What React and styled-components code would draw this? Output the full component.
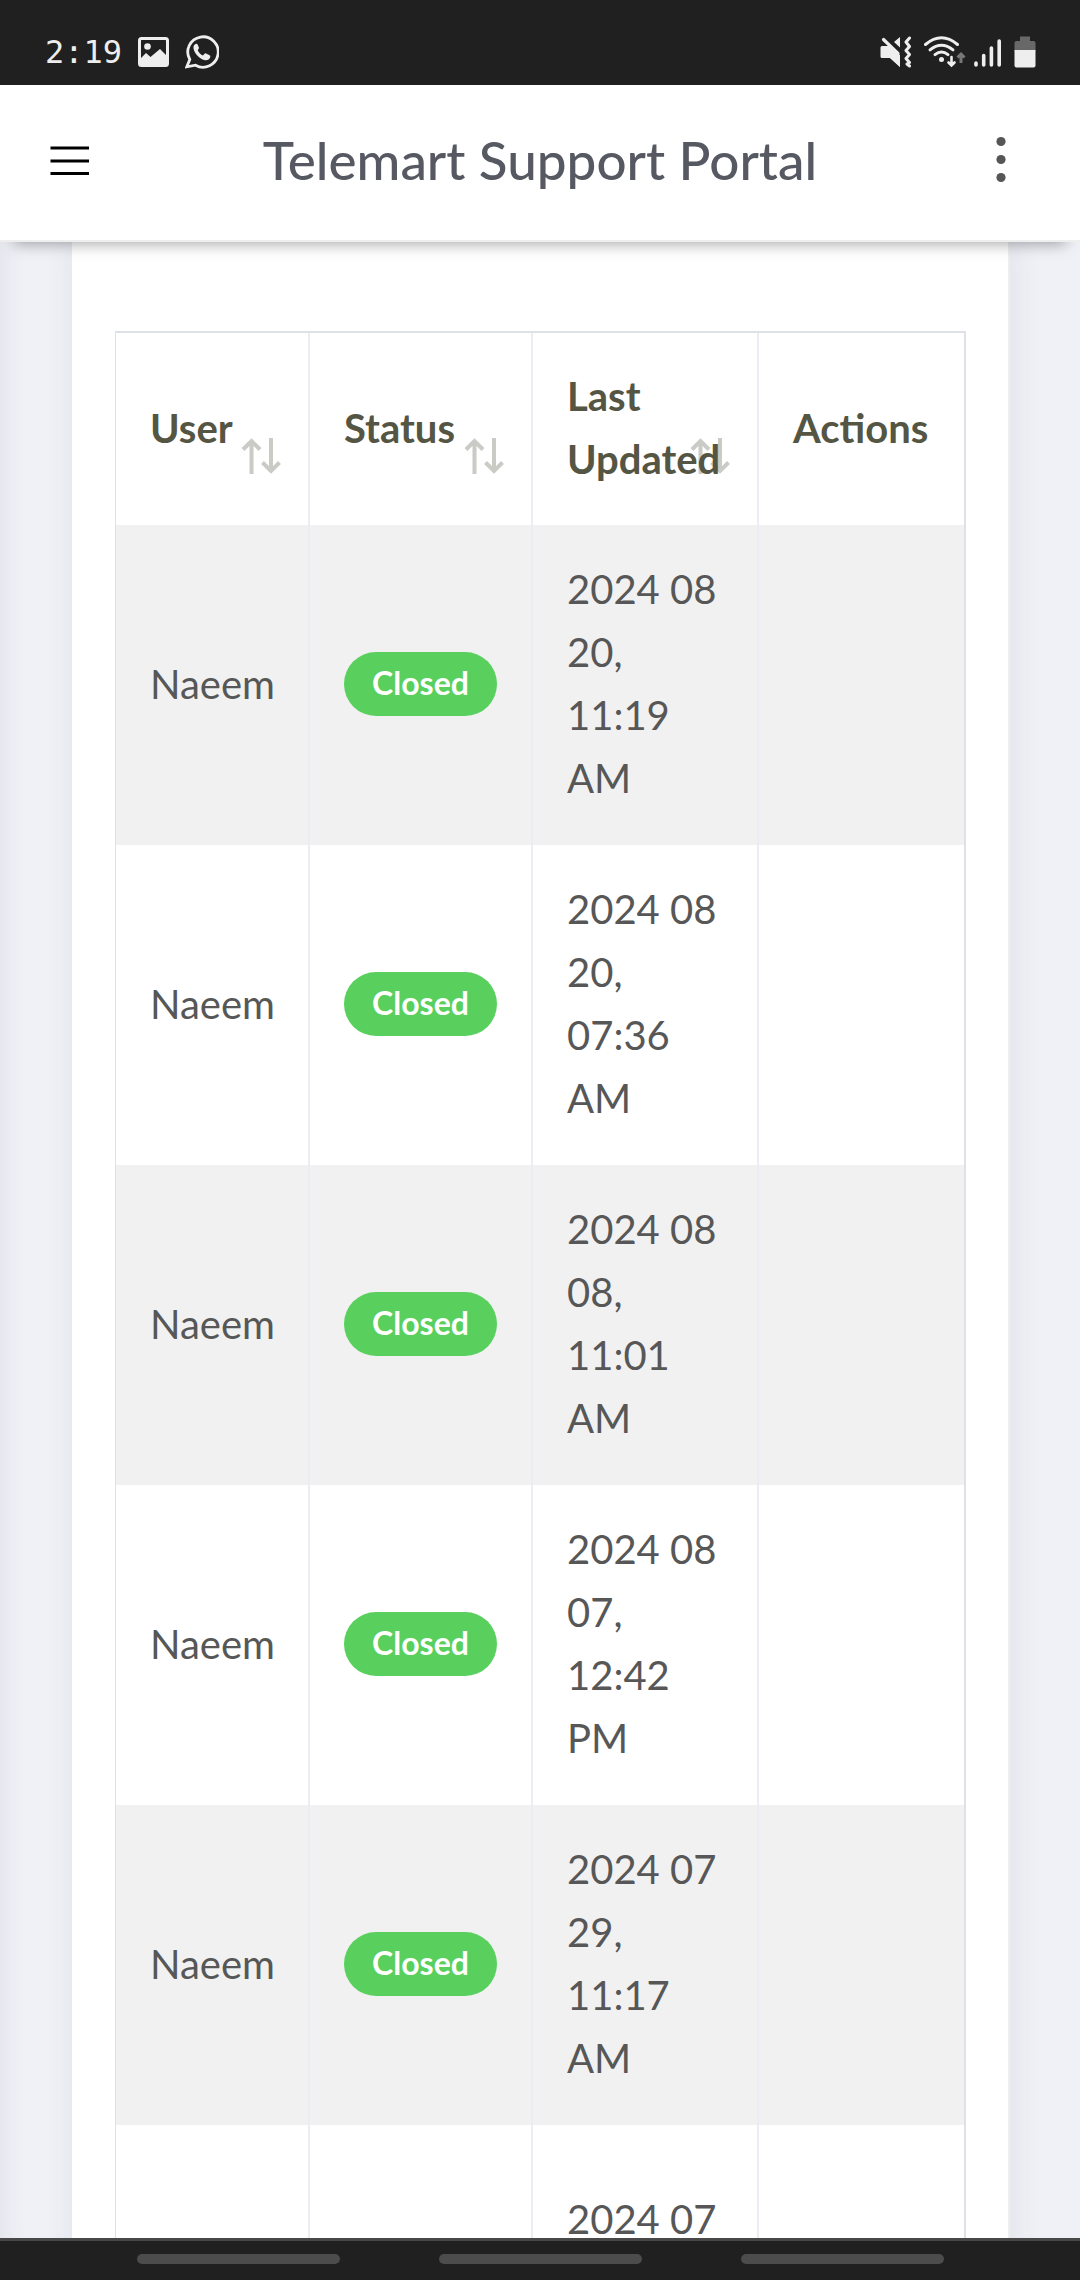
import React from 'react'
import styled, { createGlobalStyle } from 'styled-components'

const GlobalStyle = createGlobalStyle`
*{
  box-sizing:border-box;
}
body{
  margin:0;
  background-color:#eff1f7;
  font-family:Lato,"Open Sans",sans-serif;
}
button{
  border:none;
  background:none;
  padding:0;
  margin:0;
  font:inherit;
  color:inherit;
  text-align:left;
  cursor:pointer;
}
svg{
  display:block;
  flex:none;
}
`
const Screen = styled.div`
  display:flex;
  flex-direction:column;
  height:100vh;
  overflow:hidden;
`
const StatusBar = styled.div`
  display:flex;
  justify-content:space-between;
  align-items:center;
  flex:none;
  height:85px;
  padding:18px 44px 0 45px;
  background-color:#202020;
  color:#eeeeee;
`
const Group = styled.div`
  display:flex;
  align-items:center;
  gap:${props => props.$gap};
`
const Time = styled.span`
  font-family:"DejaVu Sans Mono",monospace;
  font-size:32px;
  line-height:40px;
`
const Header = styled.header`
  position:relative;
  z-index:2;
  display:flex;
  justify-content:space-between;
  align-items:center;
  flex:none;
  height:157px;
  padding:0 74px 6px 50px;
  background-color:#ffffff;
  border-bottom:2px solid #eeeeee;
  box-shadow:0 16px 14px -14px rgba(0,0,0,0.35);
`
const Title = styled.h1`
  margin:0;
  font-size:53px;
  font-weight:500;
  line-height:64px;
  color:#575962;
`
const Main = styled.main`
  flex:1;
  min-height:0;
  overflow-y:auto;
  scrollbar-width:none;
  padding:0 70px 0 72px;
  background-color:#eff1f7;
  box-shadow:inset 24px 0 24px -20px rgba(69,65,78,0.08);
`
const Card = styled.section`
  min-height:100%;
  padding:89px 42px 0 43px;
  background-color:#ffffff;
  border-right:2px solid #eeeeee;
  box-shadow:2px 0 30px rgba(69,65,78,0.09);
`
const Table = styled.table`
  width:100%;
  table-layout:fixed;
  border-collapse:separate;
  border-spacing:0;
  border:solid #dee2e6;
  border-width:2px 2px 0 1px;
  font-size:40px;
  line-height:63px;
`
const Col = styled.col`
  width:${props => props.$width || 'auto'};
`
const Th = styled.th`
  position:relative;
  height:192px;
  padding:32px 34px 34px;
  font-weight:700;
  text-align:left;
  color:#555544;
  border-right:2px solid #ebedf2;
  &:last-child{
    border-right:none;
    padding-right:0;
  }
`
const SortIcon = styled.svg`
  position:absolute;
  right:27px;
  bottom:50px;
  opacity:0.3;
`
const Row = styled.tr`
  background-color:${props => (props.$striped ? '#f1f1f1' : '#ffffff')};
`
const Td = styled.td`
  height:320px;
  padding:${props => (props.$last ? '74px' : '33px')} 34px 35px;
  line-height:${props => (props.$last ? '40px' : '63px')};
  vertical-align:${props => (props.$last ? 'top' : 'middle')};
  color:#575757;
  border-right:2px solid #ebedf2;
  &:last-child{
    border-right:none;
  }
`
const Badge = styled.span`
  display:flex;
  justify-content:center;
  align-items:center;
  height:64px;
  padding-bottom:2px;
  border-radius:32px;
  background-color:#59d05d;
  color:#ffffff;
  font-size:32px;
  font-weight:700;
  line-height:40px;
`
const NavBar = styled.nav`
  display:flex;
  justify-content:center;
  align-items:center;
  gap:99px;
  flex:none;
  height:42px;
  padding-bottom:3px;
  background-color:#202020;
  border-top:3px solid #484848;
`
const NavPill = styled.button`
  width:203px;
  height:10px;
  border-radius:5px;
  background-color:#4c4c4c;
`

const PhotoIcon = () => (
  <svg width="31" height="30" viewBox="0 0 31 30">
    <rect x="1.5" y="1.5" width="28" height="27" rx="2" fill="none" stroke="#eee" strokeWidth="3" />
    <circle cx="9.5" cy="9.5" r="3.3" fill="#eee" />
    <path d="M2 22 L8 16 L12.500 20 L22 12 L29 19 V28 H2 Z" fill="#eee" />
  </svg>
)
const WhatsappIcon = () => (
  <svg width="34" height="34" viewBox="0 0 34 34">
    <path d="M4.800 24.500 A15.200 15.200 0 1 1 10.500 30.200 L1.800 31.800 Z" fill="none" stroke="#eee" strokeWidth="2.800" />
    <path d="M10.600 9 C8.200 10.200 8 12.600 9 15.200 C10.800 19.800 14.600 23.600 19.200 25 C22 25.800 24.400 24.800 25.200 22.200 C25.500 21 25.200 20.600 24.200 20 L21 18.500 C20.200 18.200 19.800 18.400 19.300 19 L18 20.500 C15.800 19.500 13.800 17.600 12.700 15.200 L13.700 13.800 C14.100 13.200 14 12.800 13.800 12.200 L12.600 9.600 C12.200 8.800 11.500 8.700 10.600 9 Z" fill="#eee" />
  </svg>
)
const MuteIcon = () => (
  <svg width="32" height="32" viewBox="0 0 32 32">
    <path d="M2 10 H8 L20 21 V31 L10 22 H2 Q0.500 22 0.500 20.500 V11.500 Q0.500 10 2 10 Z" fill="#eee" />
    <path d="M8 9 L20 19 V31 L8 20 Z" fill="#eee" />
    <path d="M20 1 V11.500 L14 6 Z" fill="#eee" />
    <path d="M3.500 3.500 L18 17.500" stroke="#eee" strokeWidth="3.200" strokeLinecap="round" />
    <path d="M29.500 2 L26 6 L29.500 10.500 L26 14.500 L29.500 18.500 L26 22.500 L29.500 26.500 L27 28 L29.500 30" fill="none" stroke="#eee" strokeWidth="3" strokeLinecap="round" strokeLinejoin="round" />
  </svg>
)
const WifiIcon = () => (
  <svg width="42" height="32" viewBox="0 0 42 32">
    <g fill="none" stroke="#eee" strokeWidth="3" strokeLinecap="round">
      <path d="M1.500 8.500 Q17.500 -5 33.500 8.500" />
      <path d="M6 13.800 Q17.500 4.600 29 13.800" />
      <path d="M11 18.600 Q17.500 13.400 24 18.600" />
      <path d="M27.500 21 V29 M24.500 26.500 L27.500 29.500 L30.500 26.500" strokeWidth="2.600" />
    </g>
    <circle cx="17.500" cy="23.500" r="2.500" fill="#eee" />
    <path d="M37 27 V19 M33.500 21.500 L37 18 L40.500 21.500" fill="none" stroke="#777" strokeWidth="3" />
  </svg>
)
const SignalIcon = () => (
  <svg width="28" height="32" viewBox="0 0 28 32">
    <path d="M2 27 V29 M9.700 19.500 V29 M17.400 12 V29 M25.200 5 V29" stroke="#eee" strokeWidth="3.600" strokeLinecap="round" />
  </svg>
)
const BatteryIcon = () => (
  <svg width="22" height="32" viewBox="0 0 22 32">
    <path d="M6 0.500 H16 V5 H19.500 Q21.500 5 21.500 7 V15 H0.500 V7 Q0.500 5 2.500 5 H6 Z" fill="#686868" />
    <path d="M0.500 14 H21.500 V29.500 Q21.500 31.500 19.500 31.500 H2.500 Q0.500 31.500 0.500 29.500 Z" fill="#eee" />
  </svg>
)
const MenuIcon = () => (
  <svg width="40" height="32" viewBox="0 0 40 32">
    <path d="M0.500 4 H39 M0.500 17 H39 M0.500 29.500 H39" stroke="#000" strokeWidth="3" />
  </svg>
)
const MoreIcon = () => (
  <svg width="16" height="48" viewBox="0 0 16 48">
    <g fill="#565656">
      <circle cx="11" cy="5.500" r="4.600" />
      <circle cx="11" cy="23.500" r="4.600" />
      <circle cx="11" cy="41.500" r="4.600" />
    </g>
  </svg>
)
const SortArrows = () => (
  <SortIcon width="40" height="38" viewBox="0 0 40 38">
    <g fill="none" stroke="#555544" strokeWidth="4">
      <path d="M10.500 37 V4 M2 12.500 L10.500 4 L19 12.500" />
      <path d="M30 1 V34 M21.500 25.500 L30 34 L38.500 25.500" />
    </g>
  </SortIcon>
)

const columns = [
  { label: 'User', width: '194px', sort: true },
  { label: 'Status', width: '223px', sort: true },
  { label: 'Last Updated', width: '226px', sort: true },
  { label: 'Actions' },
]
const tickets = [
  { user: 'Naeem', status: 'Closed', updated: '2024 08 20, 11:19 AM' },
  { user: 'Naeem', status: 'Closed', updated: '2024 08 20, 07:36 AM' },
  { user: 'Naeem', status: 'Closed', updated: '2024 08 08, 11:01 AM' },
  { user: 'Naeem', status: 'Closed', updated: '2024 08 07, 12:42 PM' },
  { user: 'Naeem', status: 'Closed', updated: '2024 07 29, 11:17 AM' },
  { updated: '2024 07', last: true },
]

const TicketTable = () => {
  return <Table>
    <colgroup>
      {columns.map(col => <Col key={col.label} $width={col.width} />)}
    </colgroup>
    <thead>
      <tr>
        {columns.map(col => (
          <Th key={col.label} scope="col">
            {col.sort ? <button type="button">{col.label}<SortArrows /></button> : col.label}
          </Th>
        ))}
      </tr>
    </thead>
    <tbody>
      {tickets.map((ticket, i) => (
        <Row key={i} $striped={i % 2 === 0}>
          <Td>{ticket.user}</Td>
          <Td>{ticket.status && <Badge>{ticket.status}</Badge>}</Td>
          <Td $last={ticket.last}>{ticket.updated}</Td>
          <Td />
        </Row>
      ))}
    </tbody>
  </Table>
}

const App = () => {
  return <Screen>
    <GlobalStyle />
    <StatusBar>
      <Group $gap="16px">
        <Time>2:19</Time>
        <PhotoIcon />
        <WhatsappIcon />
      </Group>
      <Group $gap="12px">
        <MuteIcon />
        <Group $gap="8px">
          <WifiIcon />
          <SignalIcon />
        </Group>
        <BatteryIcon />
      </Group>
    </StatusBar>
    <Header>
      <button type="button" aria-label="Menu"><MenuIcon /></button>
      <Title>Telemart Support Portal</Title>
      <button type="button" aria-label="More options"><MoreIcon /></button>
    </Header>
    <Main>
      <Card>
        <TicketTable />
      </Card>
    </Main>
    <NavBar>
      <NavPill type="button" aria-label="Recent apps" />
      <NavPill type="button" aria-label="Home" />
      <NavPill type="button" aria-label="Back" />
    </NavBar>
  </Screen>
}
export default App
